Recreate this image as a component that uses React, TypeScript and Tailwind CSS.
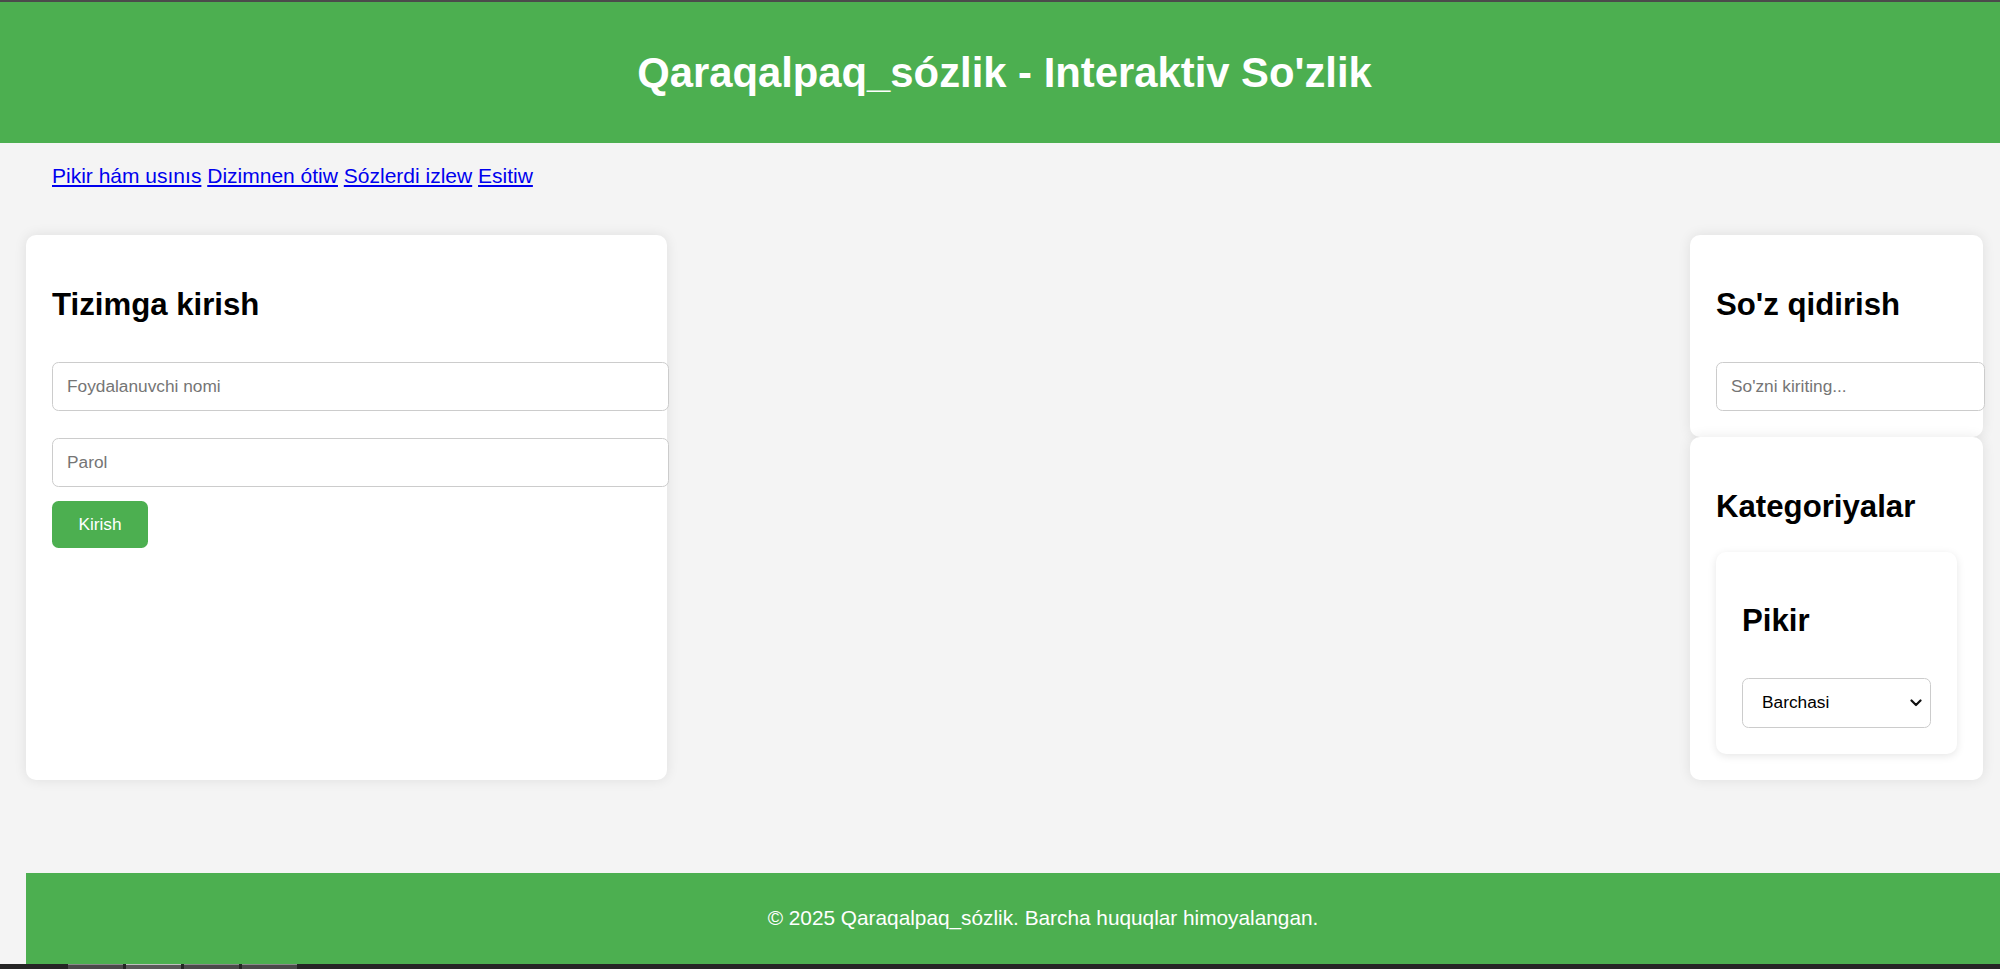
import React from 'react';

const NAV_LINKS = ['Pikir hám usınıs', 'Dizimnen ótiw', 'Sózlerdi izlew', 'Esitiw'];

const Card = ({ children, className = '' }: { children: React.ReactNode; className?: string }) => (
  <div className={`bg-white rounded-[10px] shadow-[0_0_13px_rgba(0,0,0,0.09)] px-[26px] pt-[26px] pb-[26px] ${className}`}>
    {children}
  </div>
);

const Heading = ({ children, className = '' }: { children: React.ReactNode; className?: string }) => (
  <h2 className={`text-[31.2px] font-bold leading-[36px] text-black ${className}`}>{children}</h2>
);

const TextInput = ({ placeholder, type = 'text', className = '' }: { placeholder: string; type?: string; className?: string }) => (
  <input
    type={type}
    placeholder={placeholder}
    className={`block h-[49px] w-[calc(100%+28px)] rounded-[6.5px] border border-[#cccccc] bg-white px-[14px] text-[17.3px] text-black placeholder:text-[#757575] outline-none ${className}`}
  />
);

const App = () => {
  return (
    <div className="h-[969px] w-full overflow-hidden bg-[#f4f4f4] font-['Liberation_Sans',Arial,sans-serif] text-black">
      <div className="h-[2px] bg-[#4b4b4b]" />
      <header className="flex h-[141px] items-center justify-center bg-[#4caf50] pl-[9px]">
        <h1 className="text-[41.8px] font-bold leading-[48px] text-white">Qaraqalpaq_sózlik - Interaktiv So'zlik</h1>
      </header>

      <nav className="mt-[21px] pl-[52px] text-[21px] leading-[24px]">
        {NAV_LINKS.map((link, i) => (
          <React.Fragment key={link}>
            <a href="#" className="text-[#0000ee] underline">
              {link}
            </a>
            {i < NAV_LINKS.length - 1 ? ' ' : null}
          </React.Fragment>
        ))}
      </nav>

      <main className="mt-[47px] flex items-stretch pl-[26px] pr-[17px]">
        <Card className="w-[641px]">
          <Heading className="mt-[26px]">Tizimga kirish</Heading>
          <TextInput placeholder="Foydalanuvchi nomi" className="mt-[39px]" />
          <TextInput placeholder="Parol" type="password" className="mt-[27px]" />
          <button className="mt-[14px] h-[47px] w-[96px] rounded-[6.5px] bg-[#4caf50] text-[17.3px] text-white">
            Kirish
          </button>
        </Card>

        <div className="flex-1" />

        <div className="flex w-[293px] flex-col">
          <Card>
            <Heading className="mt-[26px]">So'z qidirish</Heading>
            <TextInput placeholder="So'zni kiriting..." className="mt-[39px]" />
          </Card>
          <Card>
            <Heading className="mt-[26px]">Kategoriyalar</Heading>
            <div className="mt-[27px] rounded-[10px] bg-white px-[26px] pt-[26px] pb-[26px] shadow-[0_2px_9px_rgba(0,0,0,0.1)]">
              <Heading className="mt-[25px]">Pikir</Heading>
              <div className="relative mt-[39px]">
                <select className="block h-[49.5px] w-full appearance-none rounded-[6.5px] border border-[#cccccc] bg-white pl-[19px] text-[17.3px] text-black outline-none">
                  <option>Barchasi</option>
                </select>
                <svg
                  className="pointer-events-none absolute right-[9px] top-1/2 -translate-y-1/2"
                  width="12"
                  height="8"
                  viewBox="0 0 12 8"
                  fill="none"
                >
                  <path d="M1.5 1.5 L6 6 L10.5 1.5" stroke="#111" strokeWidth="2.2" strokeLinecap="round" strokeLinejoin="round" />
                </svg>
              </div>
            </div>
          </Card>
        </div>
      </main>

      <footer className="ml-[26px] mt-[93px] flex h-[91px] w-[2034px] items-center justify-center bg-[#4caf50] text-[20.8px] text-white">
        © 2025 Qaraqalpaq_sózlik. Barcha huquqlar himoyalangan.
      </footer>

      <div className="flex h-[5px] items-stretch gap-[3px] bg-[#252525] pl-[68px]">
        <div className="w-[55px] border-t border-[#8a8a8a] bg-[#4a4a4a]" />
        <div className="w-[55px] border-t border-[#c0c0c0] bg-[#5a5a5a]" />
        <div className="w-[55px] border-t border-[#8a8a8a] bg-[#4a4a4a]" />
        <div className="w-[55px] border-t border-[#8a8a8a] bg-[#4a4a4a]" />
      </div>
    </div>
  );
};

export default App;
